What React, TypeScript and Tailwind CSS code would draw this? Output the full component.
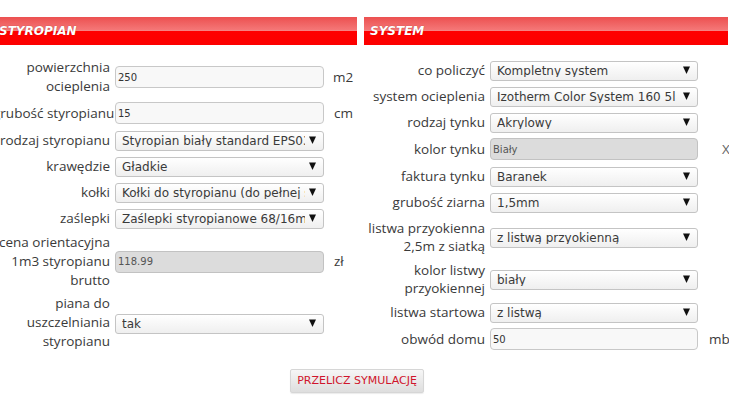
import React from "react";

const Arrow = () => (
  <svg
    className="pointer-events-none absolute right-[8px] top-1/2 -translate-y-1/2"
    width="7"
    height="8"
    viewBox="0 0 7 8"
  >
    <polygon points="0,0.5 7,0.5 3.5,8" fill="#111" />
  </svg>
);

const Select: React.FC<{ value: string; width: string }> = ({ value, width }) => (
  <div className={`relative h-[20px] my-[3px] shrink-0 ${width}`}>
    <select
      defaultValue={value}
      className="appearance-none w-full h-full rounded-[3px] border border-[#c4c4c4] bg-gradient-to-b from-white to-[#efefef] pl-[6px] pr-[18px] text-[12px] leading-none text-[#3a3a3a] font-['DejaVu_Sans',sans-serif] outline-none"
    >
      <option>{value}</option>
    </select>
    <Arrow />
  </div>
);

const TextInput: React.FC<{ value: string; width: string; disabled?: boolean }> = ({
  value,
  width,
  disabled,
}) => (
  <input
    defaultValue={value}
    disabled={disabled}
    className={`h-[22px] my-[3px] shrink-0 rounded-[4px] border pl-[2px] text-[10px] font-['DejaVu_Sans',sans-serif] outline-none ${width} ${
      disabled
        ? "bg-[#dcdcdc] border-[#c2c2c2] text-[#555]"
        : "bg-[#f8f8f8] border-[#c8c8c8] text-[#333]"
    }`}
  />
);

interface RowProps {
  label: React.ReactNode;
  labelWidth: string;
  pad?: string;
  unit?: React.ReactNode;
  children: React.ReactNode;
}

const Row: React.FC<RowProps> = ({ label, labelWidth, pad = "", unit, children }) => (
  <div className={`flex items-center ${pad}`}>
    <div className={`${labelWidth} shrink-0 text-right whitespace-nowrap`}>{label}</div>
    <div className="ml-[5px] flex items-center">{children}</div>
    {unit}
  </div>
);

const Header: React.FC<{ title: string }> = ({ title }) => (
  <div className="h-[28px] flex items-center pl-[6px] bg-[linear-gradient(to_bottom,#ec5050_0%,#f47676_45%,#f78888_50%,#ff0000_51%,#fc0000_100%)]">
    <span className="text-white text-[12px] font-bold italic font-['DejaVu_Sans',sans-serif] [text-shadow:0_0_1px_rgba(120,0,0,0.6)]">
      {title}
    </span>
  </div>
);

const L = "w-[117px] leading-[19px]";
const R = "w-[121px] leading-[18px]";

export default function App() {
  return (
    <div className="w-[729px] h-[410px] overflow-hidden bg-white font-['Open_Sans',sans-serif] text-[13.5px] text-[#3a3a3a]">
      <div className="ml-[-7px] w-[735px] pt-[17px]">
        <div className="flex gap-[7px]">
          {/* styropian */}
          <div className="w-[364px]">
            <Header title="STYROPIAN" />
            <div className="mt-[10px]">
              <Row
                labelWidth={L}
                pad="py-[3px]"
                label={
                  <>
                    powierzchnia
                    <br />
                    ocieplenia
                  </>
                }
                unit={<span className="ml-[9px]">m2</span>}
              >
                <TextInput value="250" width="w-[209px]" />
              </Row>
              <Row labelWidth={L} label="grubość styropianu" unit={<span className="ml-[10px]">cm</span>}>
                <TextInput value="15" width="w-[209px]" />
              </Row>
              <Row labelWidth={L} label="rodzaj styropianu">
                <Select value="Styropian biały standard EPS038" width="w-[209px]" />
              </Row>
              <Row labelWidth={L} label="krawędzie">
                <Select value="Gładkie" width="w-[209px]" />
              </Row>
              <Row labelWidth={L} label="kołki">
                <Select value="Kołki do styropianu (do pełnej ściany)" width="w-[209px]" />
              </Row>
              <Row labelWidth={L} label="zaślepki">
                <Select value="Zaślepki styropianowe 68/16mm" width="w-[209px]" />
              </Row>
              <Row
                labelWidth={L}
                pad="py-[2px]"
                label={
                  <>
                    cena orientacyjna
                    <br />
                    1m3 styropianu
                    <br />
                    brutto
                  </>
                }
                unit={<span className="ml-[10px]">zł</span>}
              >
                <TextInput value="118.99" width="w-[209px]" disabled />
              </Row>
              <Row
                labelWidth={L}
                pad="py-[2px]"
                label={
                  <>
                    piana do
                    <br />
                    uszczelniania
                    <br />
                    styropianu
                  </>
                }
              >
                <Select value="tak" width="w-[209px]" />
              </Row>
            </div>
          </div>

          {/* system */}
          <div className="w-[364px]">
            <Header title="SYSTEM" />
            <div className="mt-[12px]">
              <Row labelWidth={R} label="co policzyć">
                <Select value="Kompletny system" width="w-[208px]" />
              </Row>
              <Row labelWidth={R} label="system ocieplenia">
                <Select value="Izotherm Color System 160 5l" width="w-[208px]" />
              </Row>
              <Row labelWidth={R} label="rodzaj tynku">
                <Select value="Akrylowy" width="w-[208px]" />
              </Row>
              <Row labelWidth={R} label="kolor tynku" unit={<span className="ml-[24px] text-[#666]">X</span>}>
                <TextInput value="Biały" width="w-[208px]" disabled />
              </Row>
              <Row labelWidth={R} label="faktura tynku">
                <Select value="Baranek" width="w-[208px]" />
              </Row>
              <Row labelWidth={R} label="grubość ziarna">
                <Select value="1,5mm" width="w-[208px]" />
              </Row>
              <Row
                labelWidth={R}
                pad="py-[4px]"
                label={
                  <>
                    listwa przyokienna
                    <br />
                    2,5m z siatką
                  </>
                }
              >
                <Select value="z listwą przyokienną" width="w-[208px]" />
              </Row>
              <Row
                labelWidth={R}
                pad="py-[2px]"
                label={
                  <>
                    kolor listwy
                    <br />
                    przyokiennej
                  </>
                }
              >
                <Select value="biały" width="w-[208px]" />
              </Row>
              <Row labelWidth={R} label="listwa startowa">
                <Select value="z listwą" width="w-[208px]" />
              </Row>
              <Row labelWidth={R} label="obwód domu" unit={<span className="ml-[11px]">mb</span>}>
                <TextInput value="50" width="w-[208px]" />
              </Row>
            </div>
          </div>
        </div>

        <div className="flex justify-center pr-[7px] mt-[16px]">
          <button className="h-[24px] px-[6px] rounded-[2px] border border-[#d6d6d6] bg-gradient-to-b from-[#f6f6f6] to-[#dedede] text-[11px] text-[#d0142c] font-['DejaVu_Sans',sans-serif] shadow-[0_1px_1px_rgba(0,0,0,0.08)]">
            PRZELICZ SYMULACJĘ
          </button>
        </div>
      </div>
    </div>
  );
}
